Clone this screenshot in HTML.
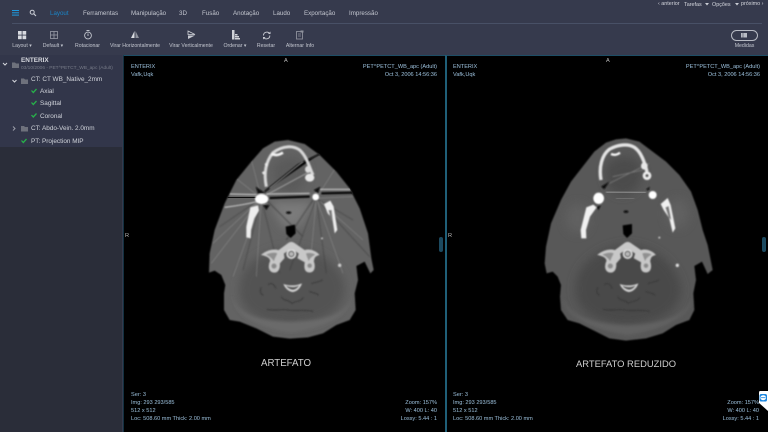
<!DOCTYPE html>
<html><head><meta charset="utf-8"><style>
html,body{margin:0;padding:0;width:768px;height:432px;overflow:hidden;background:#363a4d}
body{font-family:"Liberation Sans",sans-serif;position:relative}
.t{position:absolute;white-space:nowrap;line-height:8px;filter:blur(.3px)}
.n{top:10px;font-size:6.2px;color:#c3c6cf}
.l{top:42px;font-size:5.2px;color:#c3c6cf;transform:translateX(-50%)}
.s{font-size:6.4px;color:#d0d3da}
.o{font-size:5.6px;color:#9cc0dc}
.r{text-align:right}
svg{position:absolute;overflow:visible}
.vp{position:absolute;top:55px;height:377px;background:#000}
.h{position:absolute;top:237px;width:4px;height:15px;border-radius:2px;background:#1c4a60}
</style></head><body>
<!-- header -->
<div style="position:absolute;left:12px;top:10px;width:7px;height:1.3px;background:#1e9be0;box-shadow:0 2.3px 0 #1e9be0,0 4.6px 0 #1e9be0"></div>
<svg style="left:29px;top:9px" width="8" height="8" viewBox="0 0 8 8"><circle cx="3.2" cy="3.2" r="2" fill="none" stroke="#c9ccd4" stroke-width="1"/><path d="M4.8 4.8L7 7" stroke="#c9ccd4" stroke-width="1.1"/></svg>
<div class="t n" style="left:50px;color:#1b84c6">Layout</div>
<div class="t n" style="left:83px">Ferramentas</div>
<div class="t n" style="left:131px">Manipulação</div>
<div class="t n" style="left:179px">3D</div>
<div class="t n" style="left:202px">Fusão</div>
<div class="t n" style="left:233px">Anotação</div>
<div class="t n" style="left:273px">Laudo</div>
<div class="t n" style="left:304px">Exportação</div>
<div class="t n" style="left:349px">Impressão</div>
<div class="t" style="left:658px;top:0px;font-size:5.4px;color:#d4d6dd">‹ anterior</div>
<div class="t" style="left:684px;top:0.5px;font-size:5.4px;color:#d4d6dd">Tarefas</div>
<div class="t" style="left:712px;top:0.5px;font-size:5.4px;color:#d4d6dd">Opções</div>
<div class="t" style="left:741px;top:0px;font-size:5.4px;color:#d4d6dd">próximo ›</div>
<svg style="left:705px;top:3px" width="4" height="3"><path d="M0 0H4L2 2.5Z" fill="#c9ccd4"/></svg>
<svg style="left:735px;top:3px" width="4" height="3"><path d="M0 0H4L2 2.5Z" fill="#c9ccd4"/></svg>
<div style="position:absolute;left:12px;top:23px;width:750px;height:1px;background:#485066"></div>
<!-- toolbar -->
<svg style="left:0;top:28px" width="320" height="14" viewBox="0 0 320 14" fill="none">
<g fill="#d8dae0"><rect x="18" y="3" width="3.7" height="3.7"/><rect x="22.5" y="3" width="3.7" height="3.7"/><rect x="18" y="7.5" width="3.7" height="3.7"/><rect x="22.5" y="7.5" width="3.7" height="3.7"/></g>
<g stroke="#9a9da8" stroke-width=".8"><rect x="50.5" y="3.5" width="7" height="7"/><path d="M54 3.5V10.5M50.5 7H57.5"/></g>
<circle cx="88" cy="7.5" r="3.4" stroke="#c0c3cb" stroke-width=".9"/><path d="M86.5 2.5H89.5M88 5.5V8" stroke="#c0c3cb" stroke-width=".9"/>
<path d="M134.5 3L131 10H134.5Z" fill="#d8dae0"/><path d="M135.5 3L139 10H135.5Z" fill="#8e919c"/>
<path d="M188 3L195 6.5H188Z" stroke="#d0d2d8" stroke-width=".8"/><path d="M188 7.5H195L188 11Z" fill="#c8cad2"/>
<g fill="#d0d2d8"><rect x="232" y="2" width="2.5" height="9.5"/><rect x="235" y="6" width="2.5" height="1.5"/><rect x="235" y="8" width="4" height="1.5"/><rect x="235" y="10" width="5" height="1.5"/></g>
<path d="M263.5 7.5A3.3 3.3 0 0 1 269.5 5.5M269.8 7.5A3.3 3.3 0 0 1 263.8 9.5" stroke="#c8cad2" stroke-width=".9"/><path d="M270.5 3.5V6H268Z M263 11.5V9H265.5Z" fill="#c8cad2"/>
<rect x="296.5" y="3.5" width="6" height="7.5" stroke="#8e919c" stroke-width=".9"/><path d="M298 6H301M298 8H301" stroke="#8e919c" stroke-width=".7"/><rect x="300.5" y="2.5" width="3" height="2" fill="#8e919c"/>
</svg>
<div class="t l" style="left:22px">Layout ▾</div>
<div class="t l" style="left:53px">Default ▾</div>
<div class="t l" style="left:87.5px">Rotacionar</div>
<div class="t l" style="left:135px">Virar Horizontalmente</div>
<div class="t l" style="left:191px">Virar Verticalmente</div>
<div class="t l" style="left:235px">Ordenar ▾</div>
<div class="t l" style="left:266px">Resetar</div>
<div class="t l" style="left:300px">Alternar Info</div>
<div style="position:absolute;left:731px;top:30px;width:25px;height:9px;border:1px solid #b8bbc4;border-radius:6px"></div>
<svg style="left:741px;top:32.5px" width="7" height="6"><rect width="6" height="4.5" fill="#b8bbc4"/><path d="M2 0V4.5" stroke="#353849" stroke-width=".5"/></svg>
<div class="t l" style="left:744.5px">Medidas</div>
<!-- sidebar -->
<div style="position:absolute;left:0;top:55px;width:122px;height:377px;background:#2a2d39"></div>
<div style="position:absolute;left:0;top:55px;width:122px;height:92px;background:#32364a"></div>
<svg style="left:0;top:55px" width="122" height="92" viewBox="0 0 122 92" fill="none">
<g stroke="#d4d6dc" stroke-width="1"><path d="M3 8L5 10L7 8"/><path d="M12.5 25L14.5 27L16.5 25"/><path d="M13 71.5L15 73.5L13 75.5" stroke="#9a9da8"/></g>
<g fill="#6e717c"><path d="M12 7.5H15L16 8.5H19V13H12Z"/><path d="M21 23.5H24L25 24.5H28V29H21Z"/><path d="M21 71H24L25 72H28V76.5H21Z"/></g>
<g stroke="#27b04a" stroke-width="1.3"><path d="M31.5 35.5L33.3 37.5L36.5 34"/><path d="M31.5 47.5L33.3 49.5L36.5 46"/><path d="M31.5 60L33.3 62L36.5 58.5"/><path d="M21.5 85.5L23.3 87.5L26.5 84"/></g>
</svg>
<div class="t s" style="left:21px;top:57px;font-weight:bold;color:#d6d8de">ENTERIX</div>
<div class="t" style="left:21px;top:65px;font-size:4.8px;color:#777b88">03/10/2006 - PET^PETCT_WB_apc (Adult)</div>
<div class="t s" style="left:31px;top:76px">CT: CT WB_Native_2mm</div>
<div class="t s" style="left:40px;top:88px">Axial</div>
<div class="t s" style="left:40px;top:100px">Sagittal</div>
<div class="t s" style="left:40px;top:112.5px">Coronal</div>
<div class="t s" style="left:31px;top:125px">CT: Abdo-Vein. 2.0mm</div>
<div class="t s" style="left:31px;top:137.5px">PT: Projection MIP</div>
<!-- viewports -->
<div class="vp" style="left:123px;width:322px;border-top:1px solid #1d4e66;border-left:1px solid #12303f;box-sizing:border-box"></div>
<div class="vp" style="left:446px;width:322px;border-top:1px solid #1d4e66;border-left:1px solid #1f5f78;box-sizing:border-box"></div>
<div style="position:absolute;left:445px;top:55px;width:1px;height:377px;background:#1f5f78"></div>
<svg width="0" height="0" style="position:absolute"><defs>
<filter id="b1" x="-30%" y="-30%" width="160%" height="160%"><feGaussianBlur stdDeviation="2"/></filter>
<filter id="b2" x="-40%" y="-40%" width="180%" height="180%"><feGaussianBlur stdDeviation="14"/></filter>
<filter id="b3" x="-20%" y="-40%" width="140%" height="180%"><feGaussianBlur stdDeviation="5"/></filter>
<g id="spine">
<path d="M-88 2C-70 -12 -50 -14 -38 -10L-8 -32Q0 -38 8 -32L40 -10C52 -15 70 -10 82 2C70 6 68 10 66 22C72 40 68 52 56 54C42 54 38 44 42 24L20 12L24 -2L0 -18L-24 -2L-22 12L-36 28C-34 46 -42 56 -54 54C-66 52 -70 38 -62 20C-64 10 -72 6 -88 2Z" fill="#c8c8c8" stroke="#c8c8c8" stroke-width="3"/>
<path d="M-76 2C-64 -4 -50 -6 -42 -2C-46 8 -50 12 -52 22C-58 14 -64 8 -76 2Z" fill="#909090"/>
<path d="M72 2C62 -4 52 -4 44 -2C46 8 50 14 52 22C56 12 62 8 72 2Z" fill="#909090"/>
<circle cx="-52" cy="36" r="8" fill="#8a8a8a"/><circle cx="55" cy="35" r="7" fill="#8a8a8a"/>
<circle r="15" fill="#ddd"/><circle r="10" fill="#707070"/><circle r="5" fill="#e0e0e0"/><circle r="2.5" fill="#888"/>
<path d="M-24 90C-8 96 14 96 32 88C26 106 12 114 3 114C-8 112 -18 104 -24 90Z" fill="#d8d8d8"/>
<path d="M-16 95C-4 100 12 100 24 94C18 104 10 108 3 108C-6 106 -12 102 -16 95Z" fill="#585858"/>
<g fill="none" stroke="#363636" stroke-width="3" opacity=".8">
<path d="M-70 92C-60 84 -52 90 -46 104M-90 100C-96 112 -92 120 -84 124M60 88C76 86 84 82 94 78M54 112C64 118 76 116 82 124"/>
<path d="M-74 166C-50 172 -30 164 -10 168C10 172 40 166 66 172"/>
<path d="M-30 128C-24 142 -8 136 2 148C14 140 30 144 36 130"/>
</g>
</g>
</defs></svg>

<!-- LEFT CT -->
<svg style="left:123px;top:130px" width="322" height="250" viewBox="0 0 966 750">
<clipPath id="cl"><path d="M495 30L545 42L590 75L640 125L680 175L710 235L735 310L745 385L752 420L742 430L725 395L700 408L705 450L695 490L698 540L680 570L640 585L600 610L555 622L500 626L450 620L400 595L350 575L320 570L303 540L303 490L307 465L295 435L275 422L258 428L260 370L275 300L305 220L340 150L385 95L420 55L455 35Z"/></clipPath>
<g filter="url(#b1)"><path d="M495 30L545 42L590 75L640 125L680 175L710 235L735 310L745 385L752 420L742 430L725 395L700 408L705 450L695 490L698 540L680 570L640 585L600 610L555 622L500 626L450 620L400 595L350 575L320 570L303 540L303 490L307 465L295 435L275 422L258 428L260 370L275 300L305 220L340 150L385 95L420 55L455 35Z" fill="#646464"/></g>
<g clip-path="url(#cl)">
<path d="M350 470C350 420 400 360 505 355C610 360 660 420 665 470C670 535 610 580 505 586C400 580 340 535 350 470Z" fill="#525252" filter="url(#b2)"/>
<path d="M325 500C335 555 400 595 505 608C610 595 680 555 690 500C665 560 600 572 505 576C410 572 350 560 325 500Z" fill="#6a6a6a" filter="url(#b3)"/>
<path d="M450 110C480 70 530 70 550 110C560 150 530 190 500 190C470 190 440 150 450 110Z" fill="#5a5a5a" filter="url(#b2)"/>
<path d="M440 215L575 215L530 290H480Z" fill="#7a7a7a" filter="url(#b2)"/>
<g stroke-width="2.5" filter="url(#b1)" opacity=".45">
<path d="M415 205L270 340M415 205L265 400M415 205L330 440M415 205L400 440M415 205L320 130M415 205L380 70M580 205L720 330M580 205L660 430M580 205L560 420M580 205L690 200M580 205L640 110" stroke="#a0a0a0"/>
<path d="M415 205L290 290M415 205L360 420M415 205L470 430M580 205L740 380M580 205L610 430M580 205L500 420M580 205L690 270" stroke="#303030"/>
<path d="M430 210L540 320M570 210L490 330" stroke="#333" stroke-width="4"/>
</g>
<path d="M305 202L415 203" stroke="#111" stroke-width="11" filter="url(#b1)"/>
<path d="M440 204L560 200M595 190L700 188" stroke="#050505" stroke-width="6" filter="url(#b1)"/>
<path d="M305 232C350 226 385 220 420 210M320 192L400 194M430 192L560 190M590 178L690 178" stroke="#d4d4d4" stroke-width="3" filter="url(#b1)"/>
<path d="M425 185L525 105L590 72" stroke="#080808" stroke-width="5" filter="url(#b1)"/>
<path d="M430 195L560 125M440 175L540 95" stroke="#aaa" stroke-width="2.5" filter="url(#b1)"/>
</g>
<g filter="url(#b1)">
<path d="M430 170C422 130 428 95 450 68C480 46 510 46 530 60C552 80 558 110 570 135" fill="none" stroke="#d8d8d8" stroke-width="9"/>
<path d="M420 125L424 132M428 100L432 108" stroke="#e8e8e8" stroke-width="8"/>
<path d="M445 72C460 78 470 74 480 68" stroke="#f4f4f4" stroke-width="8" fill="none"/>
<ellipse cx="560" cy="143" rx="14" ry="12" fill="#e8e8e8"/><ellipse cx="555" cy="118" rx="9" ry="10" fill="#ddd"/>
<ellipse cx="416" cy="207" rx="20" ry="15" fill="#fff"/><circle cx="578" cy="201" r="10" fill="#fff"/>
<path d="M370 322L370 290L382 232L405 226L408 242L394 265L384 300L383 325Z" fill="#eee"/>
<path d="M603 222L622 212L632 230L643 300L635 310L628 265L614 250Z" fill="#eee"/>
<path d="M616 240L626 240L630 275L624 270Z" fill="#777"/>
<path d="M398 170L428 190L405 192ZM572 180L592 170L585 190ZM420 225L440 225L430 240Z" fill="#0a0a0a"/>
<path d="M488 290L516 284L518 310L503 324L490 312Z" fill="#000"/>
<ellipse cx="497" cy="248" rx="8" ry="4" fill="#101010"/>
<circle cx="597" cy="325" r="3" fill="#ccc"/><circle cx="650" cy="406" r="5" fill="#ccc"/>
<use href="#spine" x="505" y="372"/>
</g>
</svg>

<!-- RIGHT CT -->
<svg style="left:446px;top:130px" width="322" height="250" viewBox="0 0 966 750">
<clipPath id="cr"><path d="M540 25L580 35L620 65L660 95L700 135L735 185L755 240L770 300L785 345L793 385L800 420L785 432L768 395L745 408L750 450L742 490L745 540L730 570L690 585L650 610L600 625L540 632L490 625L450 605L400 580L365 570L345 540L342 500L345 465L335 440L320 425L302 430L296 400L300 350L315 280L345 210L375 155L410 110L445 65L480 38L510 28Z"/></clipPath>
<g filter="url(#b1)"><path d="M540 25L580 35L620 65L660 95L700 135L735 185L755 240L770 300L785 345L793 385L800 420L785 432L768 395L745 408L750 450L742 490L745 540L730 570L690 585L650 610L600 625L540 632L490 625L450 605L400 580L365 570L345 540L342 500L345 465L335 440L320 425L302 430L296 400L300 350L315 280L345 210L375 155L410 110L445 65L480 38L510 28Z" fill="#585858"/></g>
<g clip-path="url(#cr)">
<path d="M390 465C390 415 450 350 545 345C640 350 695 415 705 470C710 535 650 580 545 586C440 580 380 535 390 465Z" fill="#484848" filter="url(#b2)"/>
<path d="M350 505C360 560 440 600 545 616C650 600 730 560 738 505C715 565 640 582 545 586C450 582 375 565 350 505Z" fill="#626262" filter="url(#b3)"/>
<ellipse cx="395" cy="265" rx="36" ry="44" fill="#606060" filter="url(#b2)"/><ellipse cx="695" cy="250" rx="34" ry="44" fill="#606060" filter="url(#b2)"/>
<path d="M480 110C510 70 565 70 585 110C595 160 565 195 530 195C495 195 470 160 480 110Z" fill="#4c4c4c" filter="url(#b2)"/>
<path d="M480 186L600 188" stroke="#b8b8b8" stroke-width="3" filter="url(#b1)"/>
<path d="M510 205L565 206" stroke="#888" stroke-width="3" filter="url(#b1)"/>
<path d="M490 160L610 100M500 140L590 120" stroke="#777" stroke-width="2.5" filter="url(#b1)"/>
</g>
<g filter="url(#b1)">
<path d="M465 150C458 110 468 75 490 58C515 44 545 40 565 52C585 65 595 95 603 125" fill="none" stroke="#e4e4e4" stroke-width="10"/>
<path d="M495 72C505 76 515 74 522 68" stroke="#f8f8f8" stroke-width="7" fill="none"/>
<ellipse cx="603" cy="137" rx="13" ry="13" fill="#eee"/><ellipse cx="595" cy="108" rx="10" ry="11" fill="#e8e8e8"/>
<circle cx="603" cy="137" r="5" fill="#555"/>
<ellipse cx="458" cy="205" rx="16" ry="17" fill="#fff"/><circle cx="620" cy="195" r="12" fill="#fff"/>
<path d="M406 325L404 300L421 232L442 224L452 232L432 260L420 300L421 325Z" fill="#f0f0f0"/>
<path d="M644 222L665 204L674 225L688 295L680 308L670 265L653 240Z" fill="#f0f0f0"/>
<path d="M658 232L668 228L676 270L668 262Z" fill="#777"/>
<path d="M465 170L490 155L475 178ZM600 178L612 170L608 182ZM450 232L465 225L458 240Z" fill="#101010"/>
<path d="M530 286L558 282L558 310L543 324L532 312Z" fill="#000"/>
<ellipse cx="540" cy="245" rx="7" ry="4" fill="#0a0a0a"/>
<circle cx="640" cy="323" r="3" fill="#ccc"/><circle cx="694" cy="406" r="5" fill="#ddd"/>
<use href="#spine" x="545" y="372"/>
</g>
</svg>

<div class="h" style="left:439px"></div>
<div class="h" style="left:762px"></div>

<!-- overlays left -->
<div class="t o" style="left:131px;top:63px">ENTERIX</div>
<div class="t o" style="left:131px;top:71px">Vafk,Uqk</div>
<div class="t o r" style="right:331px;top:63px">PET^PETCT_WB_apc (Adult)</div>
<div class="t o r" style="right:331px;top:71px">Oct 3, 2006 14:56:36</div>
<div class="t" style="left:284px;top:57px;font-size:5.6px;color:#bbb">A</div>
<div class="t" style="left:125px;top:232px;font-size:5.6px;color:#bbb">R</div>
<div class="t o" style="left:131px;top:391px">Ser: 3</div>
<div class="t o" style="left:131px;top:399px">Img: 293 293/585</div>
<div class="t o" style="left:131px;top:407px">512 x 512</div>
<div class="t o" style="left:131px;top:415px">Loc: 508.60 mm Thick: 2.00 mm</div>
<div class="t o r" style="right:331px;top:399px">Zoom: 157%</div>
<div class="t o r" style="right:331px;top:407px">W: 400 L: 40</div>
<div class="t o r" style="right:331px;top:415px">Lossy: 5.44 : 1</div>
<div class="t" style="left:261px;top:359px;font-size:9.7px;line-height:10px;color:#cfcfcf">ARTEFATO</div>
<!-- overlays right -->
<div class="t o" style="left:453px;top:63px">ENTERIX</div>
<div class="t o" style="left:453px;top:71px">Vafk,Uqk</div>
<div class="t o r" style="right:8px;top:63px">PET^PETCT_WB_apc (Adult)</div>
<div class="t o r" style="right:8px;top:71px">Oct 3, 2006 14:56:36</div>
<div class="t" style="left:606px;top:57px;font-size:5.6px;color:#bbb">A</div>
<div class="t" style="left:448px;top:232px;font-size:5.6px;color:#bbb">R</div>
<div class="t o" style="left:453px;top:391px">Ser: 3</div>
<div class="t o" style="left:453px;top:399px">Img: 293 293/585</div>
<div class="t o" style="left:453px;top:407px">512 x 512</div>
<div class="t o" style="left:453px;top:415px">Loc: 508.60 mm Thick: 2.00 mm</div>
<div class="t o r" style="right:9px;top:399px">Zoom: 157%</div>
<div class="t o r" style="right:9px;top:407px">W: 400 L: 40</div>
<div class="t o r" style="right:9px;top:415px">Lossy: 5.44 : 1</div>
<div class="t" style="left:576px;top:359px;font-size:9.4px;line-height:10px;color:#cfcfcf">ARTEFATO REDUZIDO</div>
<!-- widget -->
<svg style="left:758px;top:391px" width="10" height="21" viewBox="0 0 10 21">
<path d="M2 0H10V20L1 12V2Q1 0 2 0Z" fill="#fff"/><rect x="1.5" y="3" width="7.5" height="7.5" rx="1.8" fill="#1a86e0"/><ellipse cx="5.2" cy="6.7" rx="2.8" ry="2.5" fill="#fff"/><path d="M3 6.7H7.5" stroke="#1a86e0" stroke-width=".8"/>
</svg>
</body></html>
